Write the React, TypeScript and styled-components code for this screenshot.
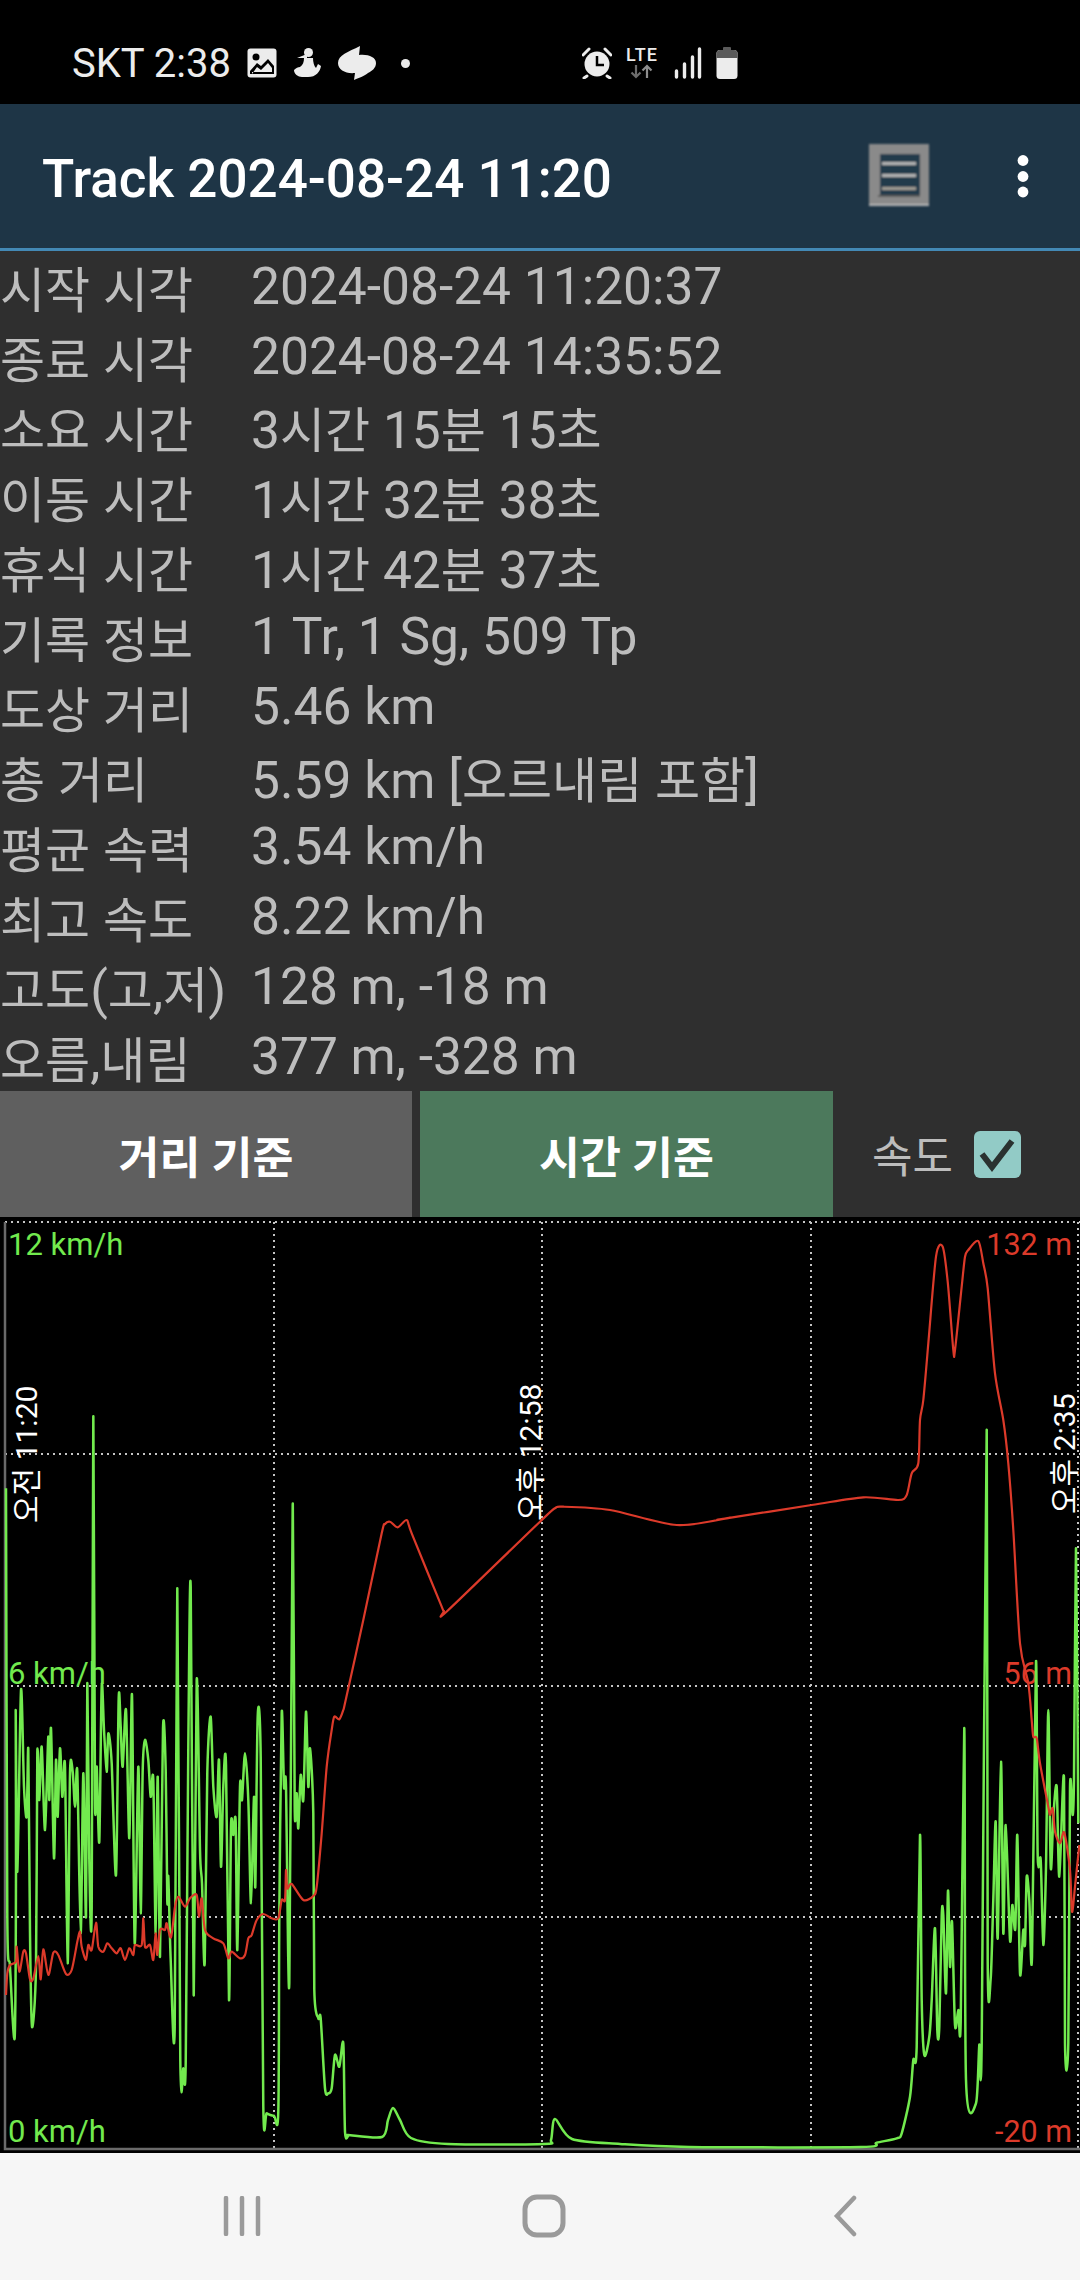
import styled, { createGlobalStyle } from "styled-components";

const GlobalStyle = createGlobalStyle`
  html, body {
    margin: 0;
    padding: 0;
    background: #000;
  }
`;

const FONT = `Roboto, "Noto Sans CJK KR", sans-serif`;

const Screen = styled.div`
  width: 1080px;
  height: 2280px;
  display: flex;
  flex-direction: column;
  background: #2f2f2f;
  font-family: ${FONT};
  overflow: hidden;
`;

const StatusBar = styled.div`
  height: 104px;
  flex: none;
  box-sizing: border-box;
  padding: 22px 0 0 72px;
  background: #000;
  display: flex;
  align-items: center;
  color: #ececec;
`;

const StatusText = styled.span`
  font-size: 40px;
  width: 158px;
  flex: none;
  white-space: nowrap;
`;

const StatusLeft = styled.div`
  width: 510px;
  flex: none;
  display: flex;
  align-items: center;
  gap: 17px;
`;

const StatusRight = styled.div`
  display: flex;
  align-items: center;
  gap: 14px;
`;

const NotifyDot = styled.div`
  width: 9px;
  height: 9px;
  margin-left: 8px;
  border-radius: 50%;
  background: #ececec;
`;

const AppBar = styled.div`
  height: 144px;
  flex: none;
  box-sizing: border-box;
  background: #1e3546;
  display: flex;
  align-items: center;
  padding: 0 51px 0 42px;
`;

const AccentLine = styled.div`
  height: 3px;
  flex: none;
  background: #4389b5;
`;

const Title = styled.div`
  flex: 1;
  padding-top: 5px;
  color: #fff;
  font-size: 53px;
  font-weight: 500;
  white-space: nowrap;
`;

const ActionIcon = styled.div<{ $gap: number }>`
  display: flex;
  margin-left: ${(p) => p.$gap}px;
`;

const StatsList = styled.div`
  height: 840px;
  flex: none;
  display: flex;
  flex-direction: column;
`;

const StatRow = styled.div`
  height: 70px;
  flex: none;
  display: flex;
  align-items: center;
  color: #bdbdbd;
  font-size: 51.5px;
  white-space: nowrap;
`;

const StatLabel = styled.div`
  width: 251px;
  flex: none;
`;

const StatValue = styled.div`
  flex: 1;
`;

// the hangul in the reference runs a little smaller than its latin digits
const Hangul = styled.span`
  font-size: 49px;
`;

const ModeBar = styled.div`
  height: 126px;
  flex: none;
  display: flex;
`;

const ModeButton = styled.div<{ $active?: boolean }>`
  width: ${(p) => (p.$active ? 413 : 412)}px;
  margin-left: ${(p) => (p.$active ? 8 : 0)}px;
  flex: none;
  display: flex;
  align-items: center;
  justify-content: center;
  background: ${(p) => (p.$active ? "#4c795c" : "#5f5f5f")};
  color: #fff;
  font-size: 44.5px;
  font-weight: 700;
`;

const SpeedToggle = styled.div`
  flex: 1;
  display: flex;
  align-items: center;
  padding-left: 39px;
  gap: 21px;
  color: #bdbdbd;
  font-size: 44px;
`;

const CheckBox = styled.div`
  width: 47px;
  height: 47px;
  border-radius: 6px;
  background: #92cbc6;
  display: flex;
  align-items: center;
  justify-content: center;
`;

const ChartPanel = styled.div`
  height: 936px;
  flex: none;
  background: #000;
`;

const ChartSvg = styled.svg`
  display: block;
  font-family: ${FONT};
`;

const NavBar = styled.div`
  flex: 1;
  background: #f6f6f6;
  display: flex;
  align-items: center;
  justify-content: center;
  padding: 0 0 1px 8px;
`;

const NavSlot = styled.div`
  width: 301px;
  display: flex;
  justify-content: center;
`;

// each trace was read off a crop: origin + crop px / 3
type P = [number, number];
const seg = (ox: number, oy: number, pts: P[]): P[] =>
  pts.map(([x, y]) => [ox + x / 3, oy + y / 3]);

// catmull-rom with a low tension, the app draws its lines slightly rounded
const toPath = (pts: P[], k = 0.14) => {
  let d = `M${pts[0][0].toFixed(1)} ${pts[0][1].toFixed(1)}`;
  for (let i = 0; i < pts.length - 1; i++) {
    const a = pts[Math.max(i - 1, 0)];
    const b = pts[i];
    const c = pts[i + 1];
    const e = pts[Math.min(i + 2, pts.length - 1)];
    const c1 = [b[0] + (c[0] - a[0]) * k, b[1] + (c[1] - a[1]) * k];
    const c2 = [c[0] - (e[0] - b[0]) * k, c[1] - (e[1] - b[1]) * k];
    d += `C${c1[0].toFixed(1)} ${c1[1].toFixed(1)} ${c2[0].toFixed(1)} ${c2[1].toFixed(1)} ${c[0].toFixed(1)} ${c[1].toFixed(1)}`;
  }
  return d;
};

const redTrace: P[] = [
  ...seg(0, 1700, [
    [18, 885], [22, 820], [30, 795], [48, 785], [50, 740], [58, 815], [70, 755], [78, 760], [90, 838], [100, 835],
    [115, 768], [122, 838], [130, 748], [145, 825], [160, 758], [175, 765], [198, 822], [215, 810], [232, 725], [240, 695],
    [245, 740], [258, 780], [265, 735], [275, 750], [288, 668], [295, 740], [310, 755], [322, 730], [335, 745], [350, 760],
    [362, 745], [375, 780], [388, 745], [400, 765], [405, 735], [425, 735], [430, 655], [435, 740], [450, 735], [460, 780],
    [467, 700], [472, 765], [480, 690], [495, 690], [500, 670], [513, 712], [525, 620], [535, 590], [555, 620], [570, 595],
    [590, 585], [597, 650], [605, 595], [615, 690], [640, 715], [670, 730], [685, 775], [695, 755], [720, 775], [735, 765],
    [745, 715], [755, 705], [770, 660], [790, 642], [815, 655], [835, 655], [845, 600], [855, 600], [858, 510], [862, 565],
    [875, 552], [910, 600], [940, 588], [950, 560], [965, 400], [980, 200], [995, 90], [1003, 50], [1018, 58], [1030, 30],
    [1037, 0],
  ]),
  ...seg(330, 1320, [
    [100, 900], [155, 640], [165, 612], [180, 605], [203, 622], [230, 600], [245, 640], [335, 860], [342, 873], [352, 873], [630, 605],
    [675, 565], [700, 560], [840, 570], [1040, 615], [1200, 593],
  ]),
  ...seg(720, 1210, [
    [0, 928], [275, 885], [430, 862], [535, 870], [560, 855], [575, 790], [595, 760], [600, 630], [610, 570], [625, 400],
    [648, 140], [668, 110], [683, 215], [700, 420], [705, 420], [725, 230], [735, 140], [745, 120], [775, 93], [790, 160],
    [803, 235], [825, 490], [850, 630], [865, 760], [880, 960], [900, 1300], [925, 1420], [935, 1530],
  ]),
  ...seg(720, 1700, [
    [940, 110], [950, 115], [960, 190], [985, 320], [990, 345], [998, 325], [1005, 395], [1020, 430], [1033, 398],
    [1050, 510], [1056, 635], [1065, 560], [1078, 435],
  ]),
];

const greenTrace: P[] = [
  ...seg(0, 1700, [
    [18, -635], [22, 650], [30, 800], [44, 1012], [48, 500], [47, 30], [52, 515], [63, -30], [72, 260], [80, 350],
    [85, 150], [90, 700], [96, 980], [108, 800], [112, 160], [118, 300], [125, 140], [135, 390], [145, 110], [148, 300],
    [153, 85], [162, 475], [168, 180], [173, 350], [180, 145], [187, 290], [195, 200], [203, 790], [210, 220], [218, 215],
    [225, 320], [232, 215], [242, 700], [250, 220], [258, 650], [262, -50], [268, 480], [275, 625], [280, -850], [285, 300],
    [290, 200], [298, 425], [305, -40], [312, 90], [320, 215], [325, 100], [335, 190], [348, 525], [356, -5], [362, 80],
    [368, 200], [378, 30], [388, 415], [396, -15], [404, 730], [415, 200], [422, 640], [428, 210], [435, 120], [445, 180],
    [452, 290], [460, 240], [467, 700], [473, 230], [480, 770], [489, 85], [497, 210], [502, 605], [505, 530], [512, 780],
    [524, 985], [532, -335], [541, 1080], [550, 1105], [557, 1090], [565, 140], [572, -340], [581, 885], [590, -60], [600, 450],
    [606, 550], [614, 790], [622, 215], [632, 50], [640, 260], [650, 350], [657, 180], [663, 500], [670, 260], [678, 195],
    [687, 900], [693, 380], [700, 405], [707, 365], [712, 750], [720, 260], [726, 300], [735, 160], [745, 300], [753, 610],
    [762, 290], [766, 560], [773, 50], [782, 170], [790, 1220], [800, 1240], [822, 1247], [835, 1235], [838, 650], [845, 40],
    [852, 260], [858, 260], [868, 850], [878, -585], [884, 320], [890, 280], [895, 385], [902, 225], [910, 300], [918, 35],
    [925, 260], [930, 145], [940, 340], [943, 870], [955, 955], [962, 955], [975, 1165], [985, 1180], [995, 1165], [1005, 1065],
    [1018, 1100], [1030, 1030], [1035, 1295], [1045, 1307],
  ]),
  [348, 2135], [382, 2137], [388, 2120], [393, 2108], [400, 2120], [411, 2138], [448, 2144], [544, 2144], [551, 2140],
  [555, 2119], [572, 2139], [620, 2144], [689, 2147], [861, 2147],
  ...seg(720, 1700, [
    [470, 1328], [530, 1315], [545, 1300], [570, 1190], [580, 1080], [590, 1040], [600, 405], [605, 900], [613, 1065], [628, 1010],
    [635, 900], [645, 685], [652, 990], [658, 980], [665, 650], [670, 645], [678, 880], [684, 572], [690, 800], [696, 665],
    [705, 975], [715, 930], [722, 965], [733, 85], [738, 1140], [768, 1210], [778, 1035], [785, 1030], [800, -810], [803, 780],
    [812, 835], [820, 600], [827, 365], [833, 715], [843, 185], [850, 700], [857, 375], [870, 720], [877, 615], [886, 685],
    [892, 405], [900, 820], [910, 690], [915, 735], [920, 530], [928, 600], [936, 770], [948, -115], [953, 470], [962, 480],
    [970, 735], [978, 500], [985, 30], [992, 500], [1000, 350], [1010, 260], [1018, 530], [1032, 235], [1035, 1030], [1045, 1030],
    [1050, 265], [1058, 345], [1062, 235], [1068, -455], [1075, 370],
  ]),
];

const stats = [
  ["시작 시각", "2024-08-24 11:20:37"],
  ["종료 시각", "2024-08-24 14:35:52"],
  ["소요 시간", "3시간 15분 15초"],
  ["이동 시간", "1시간 32분 38초"],
  ["휴식 시간", "1시간 42분 37초"],
  ["기록 정보", "1 Tr, 1 Sg, 509 Tp"],
  ["도상 거리", "5.46 km"],
  ["총 거리", "5.59 km [오르내림 포함]"],
  ["평균 속력", "3.54 km/h"],
  ["최고 속도", "8.22 km/h"],
  ["고도(고,저)", "128 m, -18 m"],
  ["오름,내림", "377 m, -328 m"],
];

const mixed = (text: string) =>
  text.split(/([가-힣]+)/).map((part, i) =>
    i % 2 ? <Hangul key={i}>{part}</Hangul> : part
  );

const gridX = [274, 542, 811, 1078];
const gridY = [1222, 1454, 1686, 1917];
const timeLabels = [
  { x: 37, y: 1523, text: "오전 11:20" },
  { x: 541, y: 1521, text: "오후 12:58" },
  { x: 1075, y: 1514, text: "오후 2:35" },
];
const GREEN = "#72ea4e";
const RED = "#dc3a2a";

const Chart = () => (
  <ChartSvg width="1080" height="936" viewBox="0 1217 1080 936">
    {gridX.map((x) => (
      <line key={x} x1={x} y1="1222" x2={x} y2="2149" stroke="#c4c4c4" strokeWidth="2" strokeDasharray="2 4" />
    ))}
    {gridY.map((y) => (
      <line key={y} x1="5" y1={y} x2="1080" y2={y} stroke="#c4c4c4" strokeWidth="2" strokeDasharray="2 4" />
    ))}
    <polyline points="5,1222 5,2149 1080,2149" fill="none" stroke="#6a6a6a" strokeWidth="2.5" />
    {timeLabels.map((t) => (
      <text key={t.text} x={t.x} y={t.y} fill="#fff" fontSize="30" transform={`rotate(-90 ${t.x} ${t.y})`}>
        {t.text}
      </text>
    ))}
    <text x="8" y="1255" fill={GREEN} fontSize="31">12 km/h</text>
    <text x="8" y="1684" fill={GREEN} fontSize="31">6 km/h</text>
    <text x="8" y="2142" fill={GREEN} fontSize="31">0 km/h</text>
    <text x="1072" y="1255" fill={RED} fontSize="30.500" textAnchor="end">132 m</text>
    <text x="1072" y="1684" fill={RED} fontSize="30.500" textAnchor="end">56 m</text>
    <text x="1072" y="2142" fill={RED} fontSize="30.500" textAnchor="end">-20 m</text>
    <path d={toPath(greenTrace)} fill="none" stroke={GREEN} strokeWidth="2.5" strokeLinejoin="round" />
    <path d={toPath(redTrace)} fill="none" stroke={RED} strokeWidth="2.2" strokeLinejoin="round" />
  </ChartSvg>
);

const ImageIcon = () => (
  <svg width="30" height="30" viewBox="0 0 30 30">
    <rect width="29" height="29" x="0.5" y="0.5" rx="3" fill="#ececec" />
    <circle cx="9" cy="9" r="3.5" fill="#000" />
    <path d="M3 23 L10 15 L14 18 L21 11 L27 18 V26 H3 Z" fill="#000" />
    <path d="M5 26 L10 19 L14 22 L21 15 L25 20 V24 H5 Z" fill="#ececec" />
  </svg>
);

const FigureIcon = () => (
  <svg width="27" height="30" viewBox="0 0 27 30">
    <circle cx="14.500" cy="4.500" r="4.500" fill="#ececec" />
    <path d="M3 10 L13 6 L13 10 Z" fill="#ececec" />
    <path d="M10 10 H19 C19 14 20 18 22 20 L24 16 L27 18 C26 24 22 29 14 29 H8 C4 29 0 26 0 22 C2 20 4 19 6 19 C9 17 10 14 10 10 Z" fill="#ececec" />
  </svg>
);

const SwirlIcon = () => (
  <svg width="38" height="34" viewBox="0 0 38 34">
    <path d="M22 0 L21 9 C30 8 38 11 38 17 C38 22 34 25 30 27 C27 30 20 32 16 34 L17 27 C8 28 0 24 0 17 C0 9 10 6 22 0 Z" fill="#ececec" />
  </svg>
);

const AlarmIcon = () => (
  <svg width="30" height="32" viewBox="0 0 30 32">
    <circle cx="15" cy="17" r="12.5" fill="#ececec" />
    <path d="M15 9 V18 H22" fill="none" stroke="#000" strokeWidth="2.5" />
    <path d="M1 8 L7 2 M29 8 L23 2 M5 29 L2 31 M25 29 L28 31" stroke="#ececec" strokeWidth="3" strokeLinecap="round" />
  </svg>
);

const LteIcon = () => (
  <svg width="34" height="42" viewBox="0 -4 34 42">
    <text x="0" y="15" fill="#ececec" fontSize="18" fontWeight="500" textLength="31">LTE</text>
    <path d="M10 19 V31 M5.5 26.5 L10 31 L14.5 26.5" fill="none" stroke="#6d6d6d" strokeWidth="2.2" />
    <path d="M21 32 V20 M16.5 24.5 L21 20 L25.5 24.5" fill="none" stroke="#8d8d8d" strokeWidth="2.2" />
  </svg>
);

const SignalIcon = () => (
  <svg width="28" height="32" viewBox="0 0 28 32">
    <path d="M2.5 24 V30 M10.5 17 V30" stroke="#ececec" strokeWidth="3.4" strokeLinecap="round" />
    <path d="M18.5 10 V30 M25.5 2 V30" stroke="#ececec" strokeWidth="3.4" strokeLinecap="round" />
  </svg>
);

const BatteryIcon = () => (
  <svg width="22" height="32" viewBox="0 0 22 32">
    <rect x="0.5" y="3" width="21" height="29" rx="3.5" fill="#ececec" />
    <path d="M0.5 11 V7 Q0.5 3 4 3 H7 V1 Q7 0 8 0 H14 Q15 0 15 1 V3 H18 Q21.500 3 21.500 7 V11 Z" fill="#5a5a5a" />
  </svg>
);

const ListIcon = () => (
  <svg width="64" height="68" viewBox="0 0 64 68">
    <defs>
      <filter id="soft" x="-10%" y="-10%" width="120%" height="120%">
        <feGaussianBlur stdDeviation="1.2" />
      </filter>
    </defs>
    <g filter="url(#soft)">
      <rect x="2" y="2" width="60" height="62" fill="#8a8a8a" />
      <rect x="2" y="62" width="60" height="2" fill="#b5b5b5" />
      <rect x="13" y="12" width="40" height="42" fill="#233a4c" />
      <rect x="15" y="20" width="34" height="3" fill="#b5b5b5" />
      <rect x="15" y="32" width="34" height="3" fill="#b5b5b5" />
      <rect x="15" y="45" width="34" height="3" fill="#a09c94" />
      <rect x="11" y="53" width="42" height="2" fill="#5a5a58" />
    </g>
  </svg>
);

const MoreIcon = () => (
  <svg width="12" height="44" viewBox="0 0 12 44">
    <circle cx="6" cy="6.500" r="5.400" fill="#fff" />
    <circle cx="6" cy="22.500" r="5.400" fill="#fff" />
    <circle cx="6" cy="38" r="5.400" fill="#fff" />
  </svg>
);

const CheckMark = () => (
  <svg width="36" height="36" viewBox="0 0 36 36">
    <path d="M3 18 L13 31 L33 5" fill="none" stroke="#2a3230" strokeWidth="6" />
  </svg>
);

const RecentsIcon = () => (
  <svg width="40" height="40" viewBox="0 0 40 40">
    <path d="M3 2 V38 M19 2 V38 M35 2 V38" stroke="#9a9a9a" strokeWidth="4.500" strokeLinecap="round" />
  </svg>
);

const HomeIcon = () => (
  <svg width="44" height="44" viewBox="0 0 44 44">
    <rect x="3" y="3" width="38" height="38" rx="12" fill="none" stroke="#9a9a9a" strokeWidth="5" />
  </svg>
);

const BackIcon = () => (
  <svg width="26" height="42" viewBox="0 0 26 42">
    <path d="M22 3 L5 21 L22 39" fill="none" stroke="#9a9a9a" strokeWidth="4.500" strokeLinecap="round" />
  </svg>
);

export default function App() {
  return (
    <>
      <GlobalStyle />
      <Screen>
        <StatusBar>
          <StatusLeft>
            <StatusText>SKT 2:38</StatusText>
            <ImageIcon />
            <FigureIcon />
            <SwirlIcon />
            <NotifyDot />
          </StatusLeft>
          <StatusRight>
            <AlarmIcon />
            <LteIcon />
            <SignalIcon />
            <BatteryIcon />
          </StatusRight>
        </StatusBar>
        <AppBar>
          <Title>Track 2024-08-24 11:20</Title>
          <ActionIcon $gap={0}>
            <ListIcon />
          </ActionIcon>
          <ActionIcon $gap={86}>
            <MoreIcon />
          </ActionIcon>
        </AppBar>
        <AccentLine />
        <StatsList>
          {stats.map(([label, value]) => (
            <StatRow key={label}>
              <StatLabel>{mixed(label)}</StatLabel>
              <StatValue>{mixed(value)}</StatValue>
            </StatRow>
          ))}
        </StatsList>
        <ModeBar>
          <ModeButton>거리 기준</ModeButton>
          <ModeButton $active>시간 기준</ModeButton>
          <SpeedToggle>
            속도
            <CheckBox>
              <CheckMark />
            </CheckBox>
          </SpeedToggle>
        </ModeBar>
        <ChartPanel>
          <Chart />
        </ChartPanel>
        <NavBar>
          <NavSlot>
            <RecentsIcon />
          </NavSlot>
          <NavSlot>
            <HomeIcon />
          </NavSlot>
          <NavSlot>
            <BackIcon />
          </NavSlot>
        </NavBar>
      </Screen>
    </>
  );
}
